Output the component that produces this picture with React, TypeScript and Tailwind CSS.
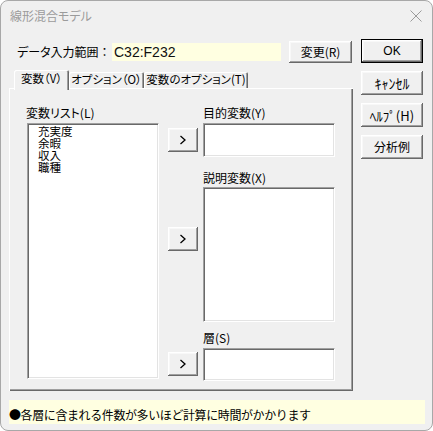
import React from 'react';

const jp = "font-['Noto_Sans_CJK_JP','Noto_Sans_CJK_SC',sans-serif]";
const palt = "[font-feature-settings:'palt']";

const raised =
  'bg-[#f0f0f0] shadow-[inset_-1px_-1px_#696969,inset_1px_1px_#ffffff,inset_-2px_-2px_#a0a0a0,inset_2px_2px_#f8f8f8]';
const sunken =
  'bg-white border border-t-[#a0a0a0] border-l-[#a0a0a0] border-r-white border-b-white shadow-[inset_1px_1px_#696969,inset_-1px_-1px_#e3e3e3]';
const tabEdge = 'rounded-t-[2px] shadow-[inset_1px_1px_#ffffff,inset_-1px_0_#696969,inset_-2px_0_#a0a0a0]';

function Button({ label, className = '' }: { label: string; className?: string }) {
  return (
    <div
      className={`flex items-center justify-center leading-none text-black ${palt} ${raised} ${className}`}
    >
      {label}
    </div>
  );
}

function Arrow({ className = '' }: { className?: string }) {
  return (
    <div className={`flex w-[30px] h-[24px] items-center justify-center ${raised} ${className}`}>
      <svg width="8" height="10" viewBox="0 0 8 10" fill="none">
        <path d="M1.5 1 L6 5 L1.5 9" stroke="#000" strokeWidth="1.3" />
      </svg>
    </div>
  );
}

const variables = ['充実度', '余暇', '収入', '職種'];

function App() {
  return (
    <div className={`w-[433px] h-[431px] bg-white ${jp}`}>
      <div className="w-[433px] h-[431px] flex flex-col bg-[#f0f0f0] border border-[#a8a8a8] rounded-[8px] overflow-hidden">
        {/* title bar */}
        <div className="h-[29px] flex items-center justify-between pl-[9px] pr-[9px]">
          <span className={`text-[12px] text-[#9b9b9b] ${palt}`}>線形混合モデル</span>
          <svg width="12" height="12" viewBox="0 0 12 12" className="mr-[1px]">
            <path d="M0.5 0.5 L11.5 11.5 M11.5 0.5 L0.5 11.5" stroke="#9b9b9b" strokeWidth="1" />
          </svg>
        </div>

        <div className="flex flex-col pl-[8px]">
          <div className="flex">
            {/* left column */}
            <div className="w-[344px] flex flex-col">
              <div className="mt-[11px] h-[22px] flex items-center">
                <span className="pl-[8px] w-[103px] text-[12px] text-black whitespace-nowrap">
                  <span className={palt}>データ入力範囲</span>：
                </span>
                <div className="w-[169px] h-[18px] bg-[#ffffe1] flex items-center pl-[2px]">
                  <span className="font-['Liberation_Sans',sans-serif] text-[14px] text-[#101010]">C32:F232</span>
                </div>
                <Button label="変更(R)" className="ml-[8px] w-[63px] h-[22px] text-[12px]" />
              </div>

              {/* tabs */}
              <div className={`mt-[7px] h-[18px] flex items-end pl-[5px] text-[11.5px] text-black whitespace-nowrap ${palt}`}>
                <div className={`relative z-10 w-[55px] h-[20px] -mb-[2px] bg-[#f0f0f0] flex items-center justify-center pb-[2px] ${tabEdge}`}>
                  <span>変数（V）</span>
                </div>
                <div className={`w-[75px] h-[16px] flex items-center justify-center ${tabEdge}`}>
                  <span>オプション（O）</span>
                </div>
                <div className={`w-[104px] h-[16px] flex items-center justify-center ${tabEdge}`}>
                  <span>変数のオプション(T)</span>
                </div>
              </div>

              {/* tab panel */}
              <div className="h-[303px] w-[344px] flex pt-[18px] pl-[17px] shadow-[inset_1px_1px_#ffffff,inset_-1px_-1px_#696969,inset_-2px_-2px_#a0a0a0]">
                <div className="flex flex-col w-[133px]">
                  <span className={`h-[14px] leading-[14px] text-[12px] text-black ${palt}`}>変数リスト(L)</span>
                  <div className={`mt-[3px] ml-[1px] w-[132px] h-[256px] pt-[1px] pl-[10px] ${sunken}`}>
                    {variables.map((v) => (
                      <div key={v} className="text-[11.5px] leading-[12px] text-black">
                        {v}
                      </div>
                    ))}
                  </div>
                </div>

                <div className="flex flex-col ml-[9px]">
                  <Arrow className="mt-[22px]" />
                  <Arrow className="mt-[75px]" />
                  <Arrow className="mt-[101px]" />
                </div>

                <div className="flex flex-col ml-[5px] w-[132px]">
                  <span className={`h-[14px] leading-[14px] text-[12px] text-black ${palt}`}>目的変数(Y)</span>
                  <div className={`mt-[3px] h-[34px] ${sunken}`} />
                  <span className={`mt-[14px] h-[14px] leading-[14px] text-[12px] text-black ${palt}`}>説明変数(X)</span>
                  <div className={`mt-[2px] h-[135px] ${sunken}`} />
                  <span className={`mt-[9px] h-[14px] leading-[14px] text-[12px] text-black ${palt}`}>層(S)</span>
                  <div className={`mt-[3px] h-[33px] ${sunken}`} />
                </div>
              </div>
            </div>

            {/* right column */}
            <div className="ml-[8px] w-[62px] pt-[9px] flex flex-col">
              <Button label="OK" className="h-[24px] border border-black text-[12px] font-['Liberation_Sans',sans-serif]" />
              <Button label="ｷｬﾝｾﾙ" className="mt-[8px] h-[24px] text-[14px]" />
              <Button label="ﾍﾙﾌﾟ(H)" className="mt-[8px] h-[24px] text-[13px]" />
              <Button label="分析例" className="mt-[8px] h-[24px] text-[12px]" />
            </div>
          </div>

          <div className="mt-[9px] w-[416px] h-[24px] bg-[#ffffe1] pt-[1px]">
            <span className="text-[12px] leading-[14px] tracking-[-0.4px] text-black">
              ●各層に含まれる件数が多いほど計算に時間がかかります
            </span>
          </div>
        </div>
      </div>
    </div>
  );
}

export default App;
